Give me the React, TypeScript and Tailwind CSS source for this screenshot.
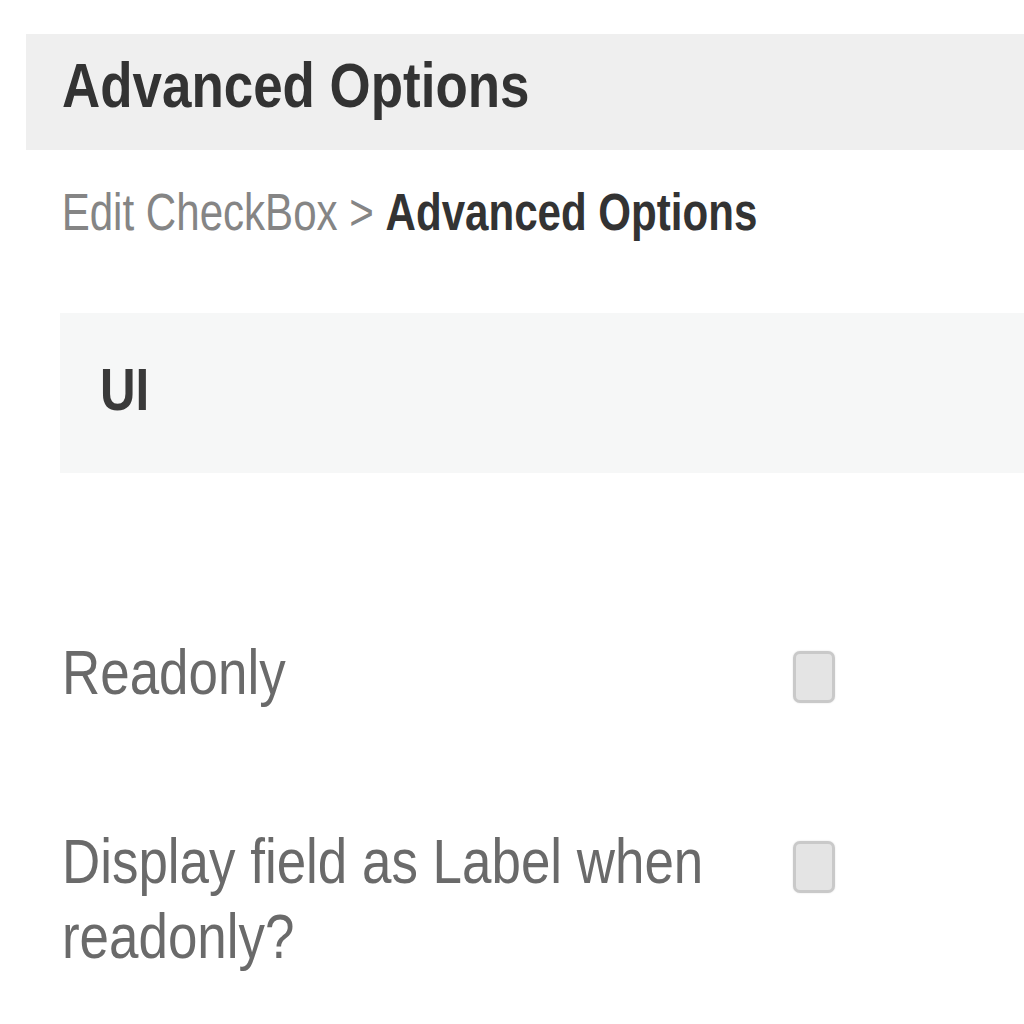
const font = {
  fontFamily: '"Liberation Sans", Arial, sans-serif',
};

function CheckRow({ label, boxTop }: { label: string; boxTop: string }) {
  return (
    <div className="flex items-start">
      <div className="w-[731px] shrink-0">
        <div className="w-[800px] origin-left scale-x-[0.84] text-[63px] leading-[75px] text-[#6a6a6a]">
          {label}
        </div>
      </div>
      <div className={`${boxTop} w-[42px] h-[52px] rounded-[7px] border-[3px] border-[#c9c9c9] bg-[#e4e4e4] shadow-[0_0_2px_rgba(0,0,0,0.12)]`} />
    </div>
  );
}

export default function App() {
  return (
    <div className="min-h-[1024px] bg-white pt-[34px] overflow-hidden" style={font}>
      <div className="ml-[26px] h-[116px] bg-[#efefef] pl-[36px] pt-[20px]">
        <h1 className="origin-left scale-x-[0.84] whitespace-nowrap text-[63px] leading-none font-bold text-[#333333]">
          Advanced Options
        </h1>
      </div>

      <div className="pl-[60px]">
        <div className="mt-[37px] pl-[2px] origin-left scale-x-[0.825] whitespace-nowrap text-[51px] leading-none text-[#858585]">
          Edit CheckBox &gt; <span className="font-bold text-[#333333]">Advanced Options</span>
        </div>

        <div className="mt-[75px] h-[160px] bg-[#f6f7f7] pl-[40px] pt-[47px]">
          <h2 className="origin-left scale-x-[0.82] text-[60px] leading-none font-bold text-[#3a3a3a]">UI</h2>
        </div>

        <div className="mt-[162px] pl-[2px]">
          <CheckRow label="Readonly" boxTop="mt-[16px]" />
          <div className="mt-[114px]">
            <CheckRow label="Display field as Label when readonly?" boxTop="mt-[17px]" />
          </div>
        </div>
      </div>
    </div>
  );
}
